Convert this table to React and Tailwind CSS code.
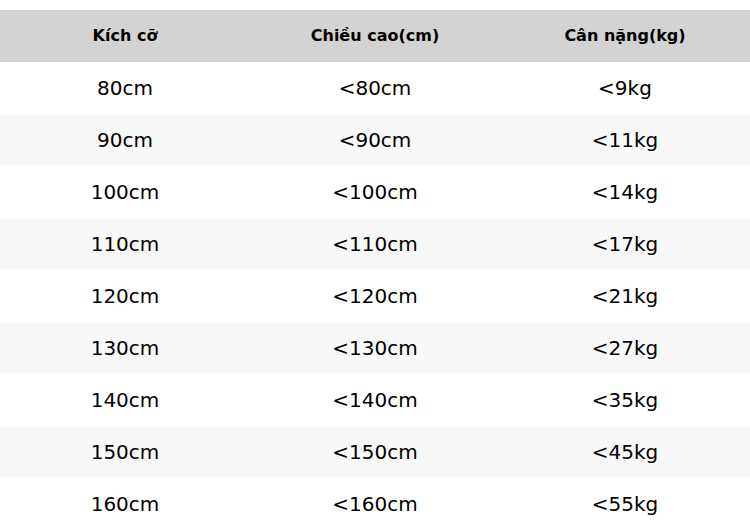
import React from "react";

const rows = [
  ["80cm", "<80cm", "<9kg"],
  ["90cm", "<90cm", "<11kg"],
  ["100cm", "<100cm", "<14kg"],
  ["110cm", "<110cm", "<17kg"],
  ["120cm", "<120cm", "<21kg"],
  ["130cm", "<130cm", "<27kg"],
  ["140cm", "<140cm", "<35kg"],
  ["150cm", "<150cm", "<45kg"],
  ["160cm", "<160cm", "<55kg"],
];

export default function App() {
  return (
    <div className="w-[750px] h-[530px] bg-white pt-[10px] overflow-hidden text-black" style={{ fontFamily: '"DejaVu Sans", sans-serif' }}>
      <div className="grid grid-cols-3 h-[52px] bg-[#d3d3d3] items-center text-center text-[16px] font-bold">
        <div>Kích cỡ</div>
        <div>Chiều cao(cm)</div>
        <div>Cân nặng(kg)</div>
      </div>
      {rows.map((r, i) => (
        <div
          key={i}
          className={`grid grid-cols-3 h-[52px] items-center text-center text-[20px] ${i % 2 === 1 ? "bg-[#f8f8f8]" : "bg-white"}`}
        >
          <div>{r[0]}</div>
          <div>{r[1]}</div>
          <div>{r[2]}</div>
        </div>
      ))}
    </div>
  );
}
